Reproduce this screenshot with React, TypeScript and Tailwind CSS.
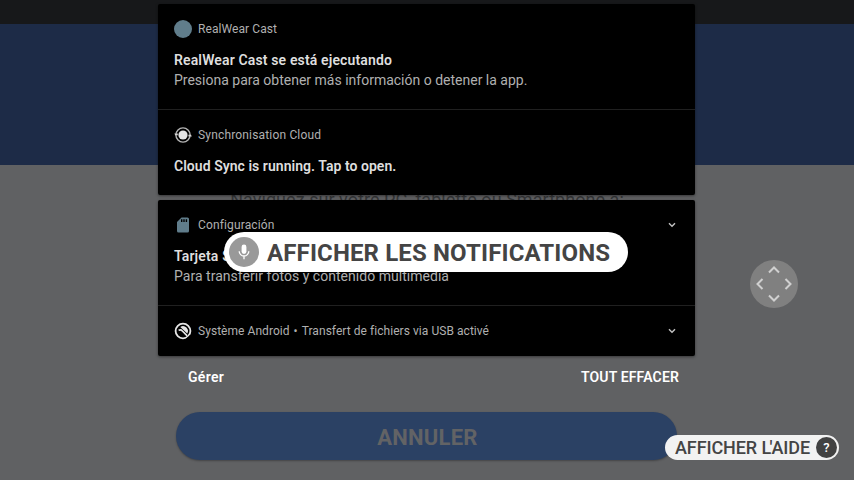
import type { ReactNode } from "react";

function Header({ icon, children, chevron }: { icon: ReactNode; children: ReactNode; chevron?: boolean }) {
  return (
    <div className="flex h-[18px] items-center text-[12px] leading-[18px] text-[#b0b0b0]">
      <span className="mr-[6px] flex size-[18px] items-center justify-center">{icon}</span>
      {children}
      {chevron && (
        <svg className="mr-[3px] ml-auto" width="8" height="6" viewBox="0 0 8 6" fill="none" stroke="#c0c0c0" strokeWidth="1.4">
          <path d="M1 1.2 4 4.3 7 1.2" />
        </svg>
      )}
    </div>
  );
}

function SyncIcon() {
  return (
    <svg width="18" height="18" viewBox="0 0 18 18" fill="none">
      <circle cx="9" cy="9" r="4.6" fill="#e4e4e4" />
      <circle cx="9" cy="9" r="7.1" stroke="#b4b4b4" strokeWidth="1.4" />
      <path d="M.4 7.4h3.4v1.8H1.2zM14.4 8.8h2.6l.8 1.8h-3.4z" fill="#d4d4d4" />
    </svg>
  );
}

function SdIcon() {
  return (
    <svg width="18" height="18" viewBox="0 0 18 18">
      <path d="M7.5 1.5H13.5Q15 1.5 15 3V15Q15 16.5 13.5 16.5H4.5Q3 16.5 3 15V6z" fill="#607d8b" />
      <path d="M7 3.2H8.4V6H7zM9.3 3.2H10.7V6H9.3zM11.7 3.2H13.1V6H11.7z" fill="#000" />
    </svg>
  );
}

function SystemIcon() {
  return (
    <svg width="18" height="18" viewBox="0 0 18 18" fill="none">
      <circle cx="9" cy="9" r="7.4" stroke="#e6e6e6" strokeWidth="1.8" />
      <path d="M6.3 5A4.9 4.9 0 0 1 13.2 11.6z" fill="#e6e6e6" />
      <path d="M4.6 8.4Q6.6 7 8.4 9L13.2 13.8" stroke="#e6e6e6" strokeWidth="1.7" />
      <path d="M12.4 17.2 16.4 13.4" stroke="#000" strokeWidth="1.4" />
    </svg>
  );
}

const card = "rounded-[2px] bg-black px-4 shadow-[0_1px_3px_rgba(0,0,0,0.45)]";

export default function App() {
  return (
    <div className="relative h-[480px] w-[854px] overflow-hidden bg-[#606163] font-[Roboto,sans-serif] whitespace-nowrap">
      <main className="flex h-full flex-col items-center">
        <div className="h-6 w-full shrink-0 bg-[#17181a]" />
        <div className="h-[141px] w-full shrink-0 bg-[#1d2b47]" />
        <p className="mt-[21px] h-[28px] text-[18px] leading-[28px] tracking-[0.05px] text-[#353638]">Naviguez sur votre PC, tablette ou Smartphone à:</p>
        <button className="mt-[198px] mr-px h-12 w-[501px] shrink-0 rounded-full bg-[#2b4164] pt-[3px] pl-[2px] text-[22px] font-bold tracking-[0.25px] text-[#626365] shadow-[0_1px_2px_rgba(0,0,0,0.3)]">ANNULER</button>
      </main>

      <section className="absolute top-1 left-[158px] flex w-[537px] flex-col">
        <div className={`${card} h-[191px]`}>
          <article className="-mx-4 h-[106px] border-b border-[#202020] px-4 pt-4">
            <Header icon={<span className="size-[18px] rounded-full bg-[#607d8b]" />}><span className="tracking-[0.08px]">RealWear Cast</span></Header>
            <h2 className="mt-[12px] text-[14px] leading-5 font-semibold tracking-[0.14px] text-[#dedede]">RealWear Cast se está ejecutando</h2>
            <p className="text-[14px] leading-5 text-[#b0b0b0]">Presiona para obtener más información o detener la app.</p>
          </article>
          <article className="pt-4">
            <Header icon={<SyncIcon />}><span className="tracking-[0.17px]">Synchronisation Cloud</span></Header>
            <h2 className="mt-[12px] text-[14px] leading-5 font-semibold tracking-[0.04px] text-[#dedede]">Cloud Sync is running. Tap to open.</h2>
          </article>
        </div>
        <div className={`${card} mt-[5px] h-[156px]`}>
          <article className="-mx-4 h-[106px] border-b border-[#202020] px-4 pt-4">
            <Header icon={<SdIcon />} chevron><span className="tracking-[0.14px]">Configuración</span></Header>
            <h2 className="mt-[12px] text-[14px] leading-5 font-semibold tracking-[0.14px] text-[#dedede]">Tarjeta SD</h2>
            <p className="text-[14px] leading-5 tracking-[0.03px] text-[#b0b0b0]">Para transferir fotos y contenido multimedia</p>
          </article>
          <article className="pt-4">
            <Header icon={<SystemIcon />} chevron>
              <span className="tracking-[0.05px]">Système Android<span className="mx-[4px]">•</span>Transfert de fichiers via USB activé</span>
            </Header>
          </article>
        </div>
        <footer className="flex justify-between pt-[11px] pr-4 pl-[30px] text-[14px] leading-5 font-semibold text-white">
          <span className="tracking-[0.3px]">Gérer</span>
          <span className="tracking-[0.15px]">TOUT EFFACER</span>
        </footer>
      </section>

      <div className="absolute top-[232px] left-[224px] flex h-10 w-[404px] items-center rounded-full bg-white pl-[5px]">
        <span className="flex size-[30px] shrink-0 items-center justify-center rounded-full bg-[#999]">
          <svg width="12" height="16" viewBox="0 0 12 16" fill="none">
            <rect x="3.6" y="0.5" width="4.8" height="9.4" rx="2.4" fill="#fff" />
            <path d="M1.2 7.2A4.8 4.8 0 0 0 10.8 7.2M6 12V15.2" stroke="#fff" strokeWidth="1.3" />
          </svg>
        </span>
        <span className="ml-2 pt-[2px] text-[24px] leading-7 font-bold tracking-[0.14px] text-[#444]">AFFICHER LES NOTIFICATIONS</span>
      </div>

      <div className="absolute top-[260px] left-[750px] size-12 rounded-full bg-[#808080]">
        <svg width="48" height="48" viewBox="0 0 48 48" fill="none" stroke="#d0d0d0" strokeWidth="2">
          <path d="M19 12.5 24 7.5 29 12.5M19 35.5 24 40.5 29 35.5M12.5 19 7.5 24 12.5 29M35.5 19 40.5 24 35.5 29" />
        </svg>
      </div>

      <div className="absolute top-[435px] left-[665px] flex h-[25px] w-[174px] items-center rounded-full bg-[#f2f2f2] pr-[2px] pl-[10px]">
        <span className="text-[18px] leading-6 font-medium tracking-[-0.1px] text-[#444]">AFFICHER L<span className="-ml-[1.5px]">'</span>AIDE</span>
        <span className="ml-auto flex size-[21px] items-center justify-center rounded-full bg-[#424242] text-[13px] font-medium text-white">?</span>
      </div>
    </div>
  );
}
